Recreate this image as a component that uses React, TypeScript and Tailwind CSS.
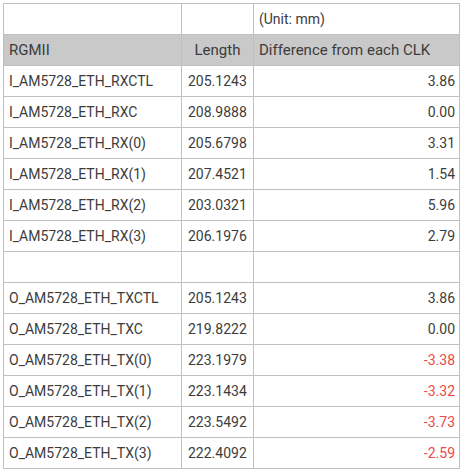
const rows: [string, string, string][] = [
  ['I_AM5728_ETH_RXCTL', '205.1243', '3.86'],
  ['I_AM5728_ETH_RXC', '208.9888', '0.00'],
  ['I_AM5728_ETH_RX(0)', '205.6798', '3.31'],
  ['I_AM5728_ETH_RX(1)', '207.4521', '1.54'],
  ['I_AM5728_ETH_RX(2)', '203.0321', '5.96'],
  ['I_AM5728_ETH_RX(3)', '206.1976', '2.79'],
  ['', '', ''],
  ['O_AM5728_ETH_TXCTL', '205.1243', '3.86'],
  ['O_AM5728_ETH_TXC', '219.8222', '0.00'],
  ['O_AM5728_ETH_TX(0)', '223.1979', '-3.38'],
  ['O_AM5728_ETH_TX(1)', '223.1434', '-3.32'],
  ['O_AM5728_ETH_TX(2)', '223.5492', '-3.73'],
  ['O_AM5728_ETH_TX(3)', '222.4092', '-2.59'],
];

const cell = 'border border-[#c0c0c0] h-[31px] p-0 align-middle';

export default function App() {
  return (
    <div
      className="bg-white w-[465px] h-[475px] pt-[3px] pl-[3px] text-[14px] text-[#3c3c3c]"
      style={{ fontFamily: 'Roboto, "Noto Sans CJK JP", sans-serif' }}
    >
      <table className="border-collapse w-[457px] table-fixed">
        <colgroup>
          <col className="w-[178px]" />
          <col className="w-[72px]" />
          <col />
        </colgroup>
        <tbody>
          <tr>
            <td className={cell}></td>
            <td className={cell}></td>
            <td className={`${cell} pl-[5px] text-[14px]`}>(Unit: mm)</td>
          </tr>
          <tr className="bg-[#c9c9c9] text-[15px]">
            <td className={`${cell} pl-[5px]`}>RGMII</td>
            <td className={`${cell} text-center`}>Length</td>
            <td className={`${cell} pl-[5px]`}>Difference from each CLK</td>
          </tr>
          {rows.map(([name, len, diff], i) => (
            <tr key={i}>
              <td className={`${cell} pl-[5px]`}>{name}</td>
              <td className={`${cell} pl-[6px]`}>{len}</td>
              <td
                className={`${cell} text-right pr-[4px] ${
                  diff.startsWith('-') ? 'text-[#f04848]' : ''
                }`}
              >
                {diff}
              </td>
            </tr>
          ))}
        </tbody>
      </table>
    </div>
  );
}
